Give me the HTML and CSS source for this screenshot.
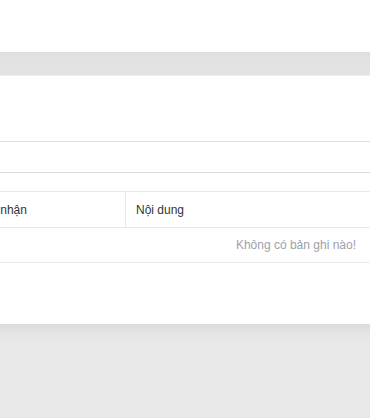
FILE: index.html
```html
<!DOCTYPE html>
<html lang="vi">
<head>
    <meta charset="UTF-8">
    <meta name="viewport" content="width=device-width, initial-scale=1.0">
    <title>Tin nhắn</title>
    <link rel="stylesheet" href="styles.css">
</head>
<body>
    <div class="topbar"></div>
    <div class="band"></div>

    <div class="card">
        <div class="search-row">
            <input type="text" class="search-input">
        </div>

        <table class="list-table">
            <thead>
                <tr>
                    <th class="col-receiver">Người nhận</th>
                    <th class="col-content">Nội dung</th>
                </tr>
            </thead>
            <tbody>
                <tr>
                    <td colspan="2" class="empty">Không có bản ghi nào!</td>
                </tr>
            </tbody>
        </table>
    </div>

    <div class="footer"></div>
</body>
</html>
```

FILE: styles.css
```css
body { margin: 0; font-family: "Liberation Sans", Arial, sans-serif; font-size: 12px; background: #fff; overflow: hidden; }
.topbar { height: 52px; background: #fff; }
.band { height: 23px; background: linear-gradient(#dddddd, #e0e0e0 3px, #e4e4e4); border-bottom: 1px solid #efefef; }
.card { height: 248px; background: #fff; box-sizing: border-box; padding-top: 65px; overflow: hidden; }
.search-row { margin: 0 -10px; }
.search-input { display: block; width: 100%; height: 32px; box-sizing: border-box; border: 1px solid #dcdde4; border-radius: 4px; outline: none; }
.list-table { margin: 18px 0 0 -47px; width: calc(100% + 47px); border-collapse: collapse; table-layout: fixed; }
.list-table th { height: 35px; padding: 0 10px; text-align: left; font-weight: normal; color: #333; border-top: 1px solid #e8e9ee; border-bottom: 1px solid #e8e9ee; white-space: nowrap; overflow: hidden; }
.col-receiver { width: 152px; border-right: 1px solid #e8e9ee; }
.list-table td.empty { height: 34px; padding: 0 14px 0 0; text-align: right; color: #9d9fab; border-bottom: 1px solid #e9e9f2; }
.footer { height: 94px; background: linear-gradient(#dcdcdc, #e3e3e3 8px, #e8e8e8 18px); }
```
